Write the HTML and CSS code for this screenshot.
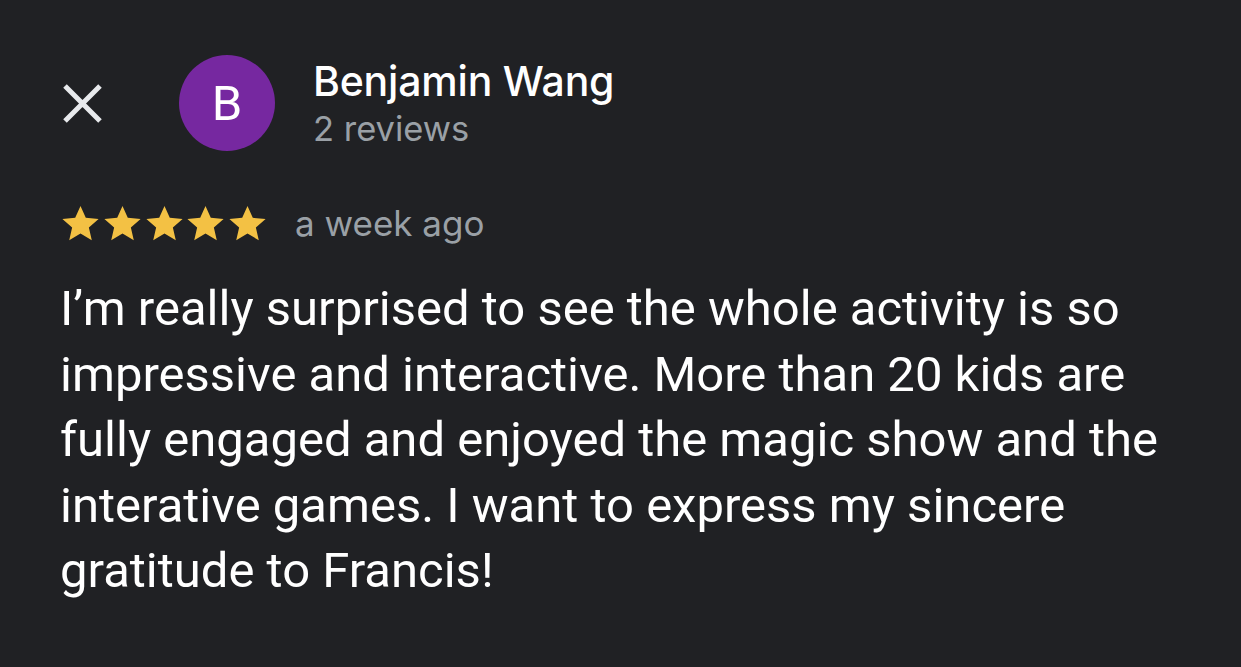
FILE: index.html
```html
<!DOCTYPE html>
<html lang="en">
<head>
<meta charset="utf-8">
<title>Review</title>
<link rel="stylesheet" href="styles.css">
</head>
<body>
<div class="review">
  <div class="header">
    <button class="close" aria-label="Close">
      <svg viewBox="0 0 41 41" width="41" height="41"><path d="M3 3 L38 38 M38 3 L3 38" stroke="#e8eaed" stroke-width="5" fill="none"/></svg>
    </button>
    <div class="avatar">B</div>
    <div class="who">
      <div class="name">Benjamin Wang</div>
      <div class="count">2 reviews</div>
    </div>
  </div>
  <div class="meta">
    <div class="stars">
      <svg viewBox="0 0 24 24" width="41" height="41"><path d="M12 1.8l3.1 6.9 7.5.7-5.7 5 1.7 7.4L12 17.9l-6.6 3.9 1.7-7.4-5.7-5 7.5-.7z" fill="#f3c144"/></svg>
      <svg viewBox="0 0 24 24" width="41" height="41"><path d="M12 1.8l3.1 6.9 7.5.7-5.7 5 1.7 7.4L12 17.9l-6.6 3.9 1.7-7.4-5.7-5 7.5-.7z" fill="#f3c144"/></svg>
      <svg viewBox="0 0 24 24" width="41" height="41"><path d="M12 1.8l3.1 6.9 7.5.7-5.7 5 1.7 7.4L12 17.9l-6.6 3.9 1.7-7.4-5.7-5 7.5-.7z" fill="#f3c144"/></svg>
      <svg viewBox="0 0 24 24" width="41" height="41"><path d="M12 1.8l3.1 6.9 7.5.7-5.7 5 1.7 7.4L12 17.9l-6.6 3.9 1.7-7.4-5.7-5 7.5-.7z" fill="#f3c144"/></svg>
      <svg viewBox="0 0 24 24" width="41" height="41"><path d="M12 1.8l3.1 6.9 7.5.7-5.7 5 1.7 7.4L12 17.9l-6.6 3.9 1.7-7.4-5.7-5 7.5-.7z" fill="#f3c144"/></svg>
    </div>
    <span class="when">a week ago</span>
  </div>
  <p class="text">I’m really surprised to see the whole activity is so impressive and interactive. More than 20 kids are fully engaged and enjoyed the magic show and the interative games. I want to express my sincere gratitude to Francis!</p>
</div>
</body>
</html>
```

FILE: styles.css
```css
html, body {
  margin: 0;
  padding: 0;
  background: #202124;
  height: 100%;
}
body {
  font-family: Inter, "Noto Sans", sans-serif;
  color: #ffffff;
}
.review {
  padding: 55px 50px 0 62px;
}
.header {
  display: flex;
  align-items: center;
  height: 96px;
}
.close {
  width: 41px;
  height: 41px;
  padding: 0;
  border: 0;
  background: none;
  display: block;
}
.close svg { display: block; }
.avatar {
  margin-left: 76px;
  width: 96px;
  height: 96px;
  border-radius: 50%;
  background: #7628a0;
  color: #fff;
  font-family: Roboto, sans-serif;
  font-size: 49px;
  display: flex;
  align-items: center;
  justify-content: center;
}
.who {
  margin-left: 38px;
  align-self: flex-start;
  margin-top: 1px;
}
.name {
  font-size: 41px;
  line-height: 50px;
  font-weight: 500;
  color: #fff;
  letter-spacing: -0.2px;
}
.count {
  font-size: 34.5px;
  line-height: 46px;
  color: #9aa0a6;
}
.meta {
  display: flex;
  align-items: center;
  margin-top: 52px;
  height: 40px;
}
.stars {
  display: flex;
  gap: 0.75px;
  margin-left: -2px;
}
.stars svg { display: block; }
.when {
  margin-left: 27px;
  font-size: 35px;
  color: #9aa0a6;
}
.text {
  margin: 33px 0 0 -2px;
  font-family: Roboto, sans-serif;
  font-size: 49px;
  line-height: 65.5px;
  color: #fff;
}
```
